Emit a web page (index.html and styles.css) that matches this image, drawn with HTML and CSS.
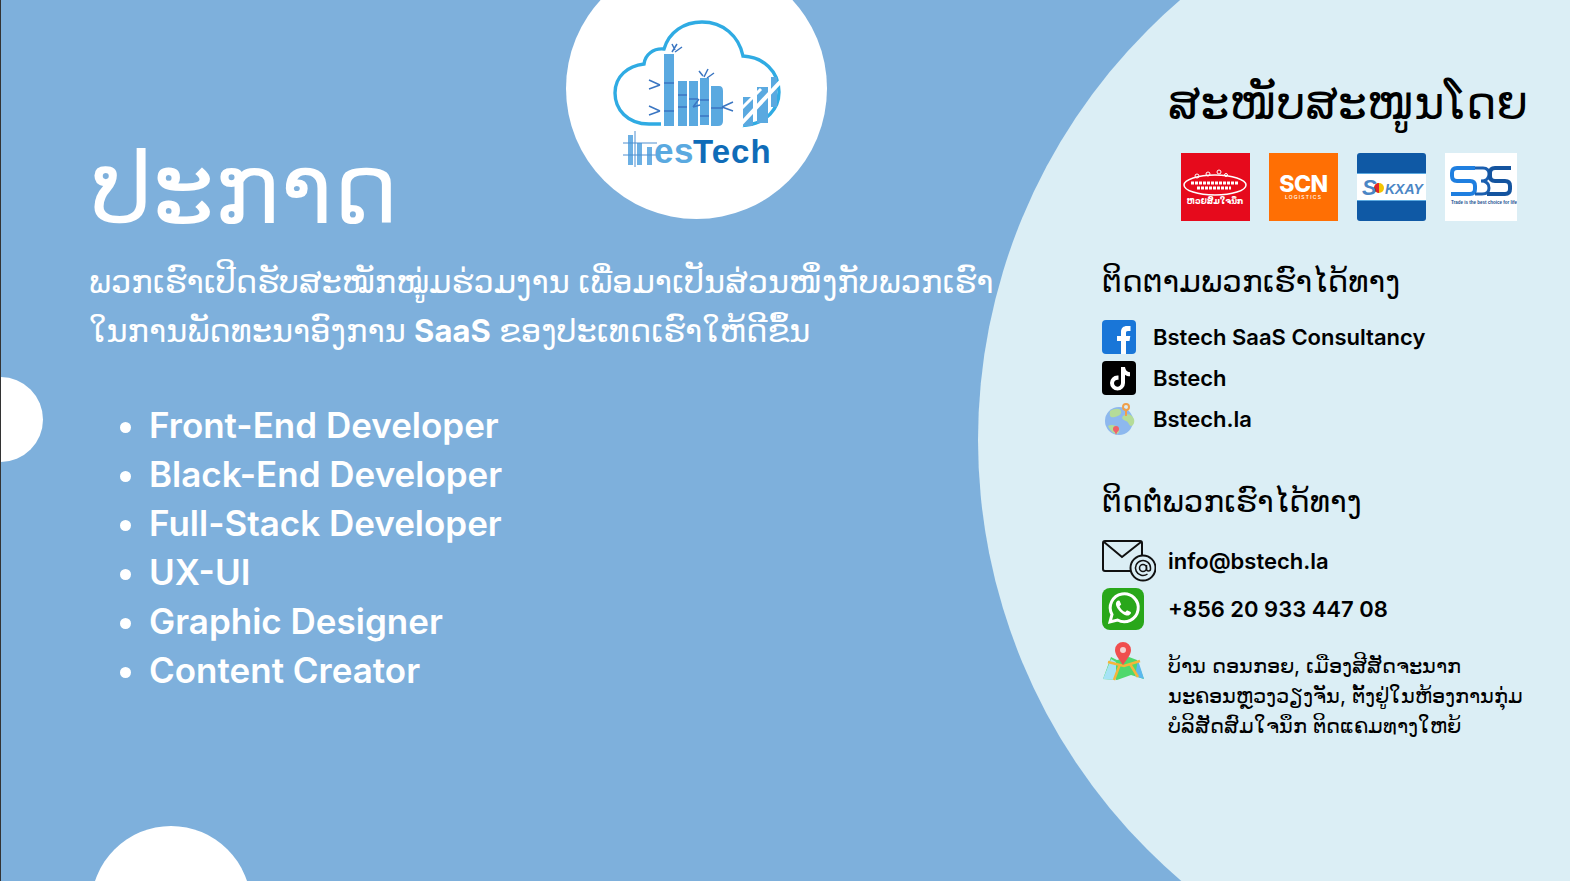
FILE: index.html
```html
<!DOCTYPE html>
<html lang="lo">
<head>
<meta charset="utf-8">
<title>ປະກາດ</title>
<link rel="stylesheet" href="styles.css">
</head>
<body>
<main class="slide">
  <div class="blob blob-right"></div>
  <div class="blob blob-logo"></div>
  <div class="blob blob-left"></div>
  <div class="blob blob-bottom"></div>

  <svg class="logo" viewBox="0 0 170 150" width="170" height="150" aria-label="BesTech">
    <path d="M50 105 H38 C16 105 4 90 4 74 C4 57 17 47 33 45 C34 36 42 29 53 30 C58 13 73 3 91 3 C112 3 128 17 132 37 C152 38 168 52 168 73 C168 90 155 104 136 106 L137 105" fill="none" stroke="#2fabe3" stroke-width="3.4"/>
    <g fill="#5aa9e0">
      <rect x="53" y="35" width="10" height="72"/><rect x="67" y="62" width="9" height="45"/><rect x="78" y="62" width="9" height="45"/><rect x="89" y="59" width="9" height="47"/><path d="M100 67 H108 Q112 67 112 72 V102 Q112 107 107 107 H100Z"/>
      <rect x="132" y="78" width="10" height="29"/><rect x="146" y="68" width="11" height="36"/><rect x="160" y="58" width="6" height="30"/>
    </g>
    <g stroke="#3b76c2" stroke-width="1.5" fill="none">
      <path d="M53 64H63M53 92H63M67 76H76M67 88H76M78 80H87M89 81H98M89 97H98M100 89H112"/>
      <path d="M61 33l5-8M64 33l7-5M64 31l-3-6M93 58l4-8M96 59l7-5M92 57l-4-5M49 66l-11-5M49 66l-11 4M49 92l-11-5M49 92l-11 4M111 88l11-5M111 88l11 4M82 88l6-8M82 88l7-2"/>
    </g>
    <path d="M128 107L170 62" stroke="#fff" stroke-width="4"/>
    <path d="M128 92L150 70" stroke="#fff" stroke-width="3"/>
    <g fill="#6cb0e4"><rect x="17" y="116" width="5" height="30"/><rect x="26" y="124" width="5" height="22"/><rect x="36" y="128" width="5" height="18"/></g>
    <path d="M12 124H46M12 136H46M24 112V148" stroke="#4f8fd0" stroke-width="1" fill="none"/>
    <text x="43" y="144" class="logo-es">es</text>
    <text x="82" y="144" class="logo-tech">Tech</text>
  </svg>

  <section class="left">
    <h1 class="title">ປະກາດ</h1>
    <p class="intro">ພວກເຮົາເປີດຮັບສະໝັກໝູ່ມຮ່ວມງານ ເພື່ອມາເປັນສ່ວນໜຶ່ງກັບພວກເຮົາ<br>ໃນການພັດທະນາອົງການ <b>SaaS</b> ຂອງປະເທດເຮົາໃຫ້ດີຂຶ້ນ</p>
    <ul class="jobs">
      <li>Front-End Developer</li>
      <li>Black-End Developer</li>
      <li>Full-Stack Developer</li>
      <li>UX-UI</li>
      <li>Graphic Designer</li>
      <li>Content Creator</li>
    </ul>
  </section>

  <aside class="right">
    <h2 class="sponsor-title">ສະໜັບສະໜູນໂດຍ</h2>
    <div class="sponsors">
      <div class="sp sp-red">
        <svg viewBox="0 0 69 68" width="69" height="68"><ellipse cx="34" cy="32" rx="31" ry="10" fill="none" stroke="#fff" stroke-width="1.5"/><path d="M10 30H58M16 35H50" stroke="#fff" stroke-width="3" stroke-dasharray="3 1"/><g fill="none" stroke="#fff"><circle cx="16" cy="23" r="2"/><circle cx="27" cy="21" r="2"/><circle cx="38" cy="19" r="2"/><circle cx="45" cy="22" r="1.5"/></g><text x="34" y="51" class="sp-red-text">ຫວຍສົມໃຈນຶກ</text></svg>
      </div>
      <div class="sp sp-orange"><span class="scn">SCN</span><span class="logi">LOGISTICS</span></div>
      <div class="sp sp-blue"><div class="sok"><svg viewBox="0 0 69 26" width="69" height="28"><circle cx="22" cy="13" r="5" fill="#f4c400"/><path d="M22 8a5 5 0 0 0 0 10z" fill="#e0242c"/><text x="5" y="20" class="sok-s">S</text><text x="28" y="19" class="sok-t">KXAY</text></svg></div></div>
      <div class="sp sp-white">
        <svg viewBox="0 0 72 68" width="72" height="68"><path d="M30 15H12Q7 15 7 20V23Q7 28 12 28H25Q30 28 30 33V36Q30 41 25 41H6" fill="none" stroke="#1f7fe0" stroke-width="4"/><path d="M30 15H38Q44 15 44 21Q44 28 36 28Q44 28 44 35Q44 41 37 41H30" fill="none" stroke="#1a5fb0" stroke-width="3"/><path d="M66 15H50Q45 15 45 20V23Q45 28 50 28H60Q65 28 65 33V36Q65 41 60 41H42" fill="none" stroke="#14549f" stroke-width="4"/><text x="6" y="51" class="sbs-text">Trade is the best choice for life...</text></svg>
      </div>
    </div>

    <h3 class="sub">ຕິດຕາມພວກເຮົາໄດ້ທາງ</h3>
    <ul class="social">
      <li>
        <svg class="ic" viewBox="0 0 34 34" width="34" height="34"><rect width="34" height="34" rx="4" fill="#1976d8"/><path d="M19 34V21h-4v-5h4v-4c0-4 2.400-6 6-6h3.500v5H26c-1.700 0-2 .8-2 2v3h4.300l-.8 5H24v13z" fill="#fff"/></svg>
        <span>Bstech SaaS Consultancy</span>
      </li>
      <li>
        <svg class="ic" viewBox="0 0 34 34" width="34" height="34"><rect width="34" height="34" rx="4" fill="#000"/><path d="M19 6h4c.3 3 2 5 5 5.300v4c-2 0-3.600-.6-5-1.600V22a7.500 7.500 0 1 1-7.500-7.500l1 .1v4.200a3.500 3.500 0 1 0 2.500 3.300z" fill="#fff"/></svg>
        <span>Bstech</span>
      </li>
      <li>
        <svg class="ic" viewBox="0 0 34 34" width="34" height="34"><circle cx="17" cy="19" r="14" fill="#8db8ee"/><path d="M8 9c5-3 10-3 11 0s-2 5-6 6-6 0-5-6zM21 14c4-3 9-2 11 3 1 4-1 7-3 7s-2-4-5-5-5-3-3-5zM6 24c3-2 8-1 11 2 1 3 0 5-2 6-4 0-7-4-9-8z" fill="#b5dc98"/><circle cx="14" cy="27" r="3" fill="#f0606a"/><path d="M12 28l2 5 2-5z" fill="#f0606a"/><circle cx="24" cy="5" r="3" fill="none" stroke="#f0a04a" stroke-width="2"/><path d="M24 8v6" stroke="#f0a04a" stroke-width="2"/></svg>
        <span>Bstech.la</span>
      </li>
    </ul>

    <h3 class="sub sub-contact">ຕິດຕໍ່ພວກເຮົາໄດ້ທາງ</h3>
    <ul class="contact">
      <li class="row-mail">
        <svg class="ic-big" viewBox="0 0 54 42" width="54" height="42"><path d="M28 31H3Q1 31 1 29V3Q1 1 3 1H38Q40 1 40 3V16" fill="none" stroke="#111" stroke-width="2"/><path d="M2 2L20 17L39 2" fill="none" stroke="#111" stroke-width="2"/><circle cx="41" cy="28" r="12.500" fill="#dbeef5" stroke="#111" stroke-width="2"/><circle cx="41" cy="28" r="3.500" fill="none" stroke="#111" stroke-width="1.500"/><path d="M44.500 25v4a2 2 0 0 0 4 0v-1a7.500 7.500 0 1 0-3 6" fill="none" stroke="#111" stroke-width="1.500"/></svg>
        <span>info@bstech.la</span>
      </li>
      <li class="row-wa">
        <svg class="ic-big" viewBox="0 0 42 42" width="42" height="42"><rect width="42" height="42" rx="8" fill="#29a71a"/><path d="M8 34l2-7.500A14 14 0 1 1 15.500 32z" fill="none" stroke="#fff" stroke-width="3"/><path d="M16 12.500c-1.500.8-2.500 2.500-2 4.500 1 4 6 9.500 10.500 10.500 2 .4 4-.7 4.500-2.500l-.3-1-3.700-1.800-1.700 1.800c-2.500-.8-5-3.300-5.800-5.800l1.700-1.700-1.600-3.800z" fill="#fff"/></svg>
        <span>+856 20 933 447 08</span>
      </li>
      <li class="row-map">
        <svg class="ic-big" viewBox="0 0 42 42" width="42" height="42"><path d="M1 37L9 15L15 18L27 15L35 18L42 37L29 33L15 38z" fill="#4fd86c"/><path d="M1 37L9 17L14 20L14 38z" fill="#a6e3f5"/><path d="M36 18L42 37L33 34z" fill="#5bb8ee"/><path d="M6 20L22 24L38 19M12 38L18 22M28 22L36 35" stroke="#f5b53a" stroke-width="2.500" fill="none"/><path d="M21 23C16 16 13 12 13 8a8 8 0 0 1 16 0c0 4-3 8-8 15z" fill="#f04e4e"/><circle cx="21" cy="8" r="3" fill="#f5d0d0"/></svg>
        <p class="addr">ບ້ານ ດອນກອຍ, ເມືອງສີສັດຈະນາກ<br>ນະຄອນຫຼວງວຽງຈັນ, ຕັ້ງຢູ່ໃນຫ້ອງການກຸ່ມ<br>ບໍລິສັດສົມໃຈນຶກ ຕິດແຄມທາງໃຫຍ້</p>
      </li>
    </ul>
  </aside>
</main>
</body>
</html>
```

FILE: styles.css
```css
* { box-sizing: border-box; margin: 0; padding: 0; }
html, body { width: 100%; height: 100%; overflow: hidden; background: #7eb0dc; }
body { font-family: "Noto Sans", "DejaVu Sans", sans-serif; }
.slide {
  position: relative;
  width: 1570px;
  height: 881px;
  overflow: hidden;
  background: #7eb0dc;
  border-left: 1px solid #333;
  display: flex;
  justify-content: space-between;
}
.blob { position: absolute; border-radius: 50%; }
.blob-right { left: 977px; top: -140px; width: 1160px; height: 1160px; background: #dbeef5; }
.blob-logo { left: 565px; top: -42px; width: 261px; height: 261px; background: #fff; }
.blob-left { left: -43px; top: 377px; width: 85px; height: 85px; background: #fff; }
.blob-bottom { left: 90px; top: 826px; width: 160px; height: 160px; background: #fff; }
.logo { position: absolute; left: 610px; top: 19px; }
.logo-es { font: 600 35px "Liberation Sans", sans-serif; fill: #5aa9e0; letter-spacing: .5px; }
.logo-tech { font: 700 33px "Liberation Sans", sans-serif; fill: #0f6cb8; letter-spacing: 1px; }

.left { position: relative; padding: 118px 0 0 88px; color: #fff; }
.title { font-size: 98px; font-weight: 400; line-height: 134px; padding-left: 2px; }
.intro { font-size: 32px; line-height: 49px; margin-top: 4px; white-space: nowrap; }
.intro b { font: 700 31px "Inter", "Open Sans", sans-serif; }
.jobs { margin: 47px 0 0 60px; font: 600 35px/49px "Inter", "Open Sans", sans-serif; }
.jobs li { padding-left: 0; }
.jobs li::marker { font-size: 35px; }

.right { position: relative; width: 468px; padding: 66px 0 0 0; color: #000; }
.sponsor-title { font-size: 46px; font-weight: 400; line-height: 70px; padding-left: 66px; white-space: nowrap; }
.sponsors { display: flex; gap: 19px; margin: 17px 0 0 79px; }
.sp { width: 69px; height: 68px; flex: none; position: relative; overflow: hidden; display: flex; flex-direction: column; align-items: center; justify-content: center; }
.sp-red { background: #e60a1c; }
.sp-orange { background: #ff6f04; color: #fff; }
.scn { font: 800 23px/20px "Inter", sans-serif; letter-spacing: -.5px; }
.logi { font: 500 5px/7px "Inter", sans-serif; letter-spacing: 1.200px; }
.sp-blue { background: #0f59a5; border-radius: 3px; }
.sok { width: 69px; height: 28px; background: #fff; border-top: 1px solid #5aa9e0; border-bottom: 1px solid #5aa9e0; display: flex; }
.sp-white { background: #fff; width: 72px; }
.sp-red-text { font-size: 8px; font-weight: 700; fill: #fff; text-anchor: middle; }
.sok-s { font: 700 italic 22px "Liberation Sans", sans-serif; fill: #4b86c5; }
.sok-t { font: 700 italic 14px "Liberation Sans", sans-serif; fill: #4b86c5; }
.sbs-text { font: 700 4.500px "Liberation Sans", sans-serif; fill: #1a4f8f; }

.sub { font-size: 31px; font-weight: 400; line-height: 46px; white-space: nowrap; }
.right .sub { margin-top: 36px; }
.right .sub-contact { margin-top: 41px; }
.social { list-style: none; margin-top: 17px; font: 600 22px/34px "Inter", sans-serif; }
.social li { display: flex; align-items: center; gap: 17px; height: 34px; margin-bottom: 7px; }
.contact { list-style: none; margin-top: 17px; font: 600 22px/30px "Inter", sans-serif; }
.contact li { display: flex; align-items: center; gap: 12px; }
.row-mail { height: 42px; margin-bottom: 6px; gap: 12px; }
.row-wa { height: 42px; margin-bottom: 12px; gap: 24px !important; }
.row-map { align-items: flex-start !important; gap: 24px !important; }
.addr { font-size: 21px; font-weight: 400; line-height: 30px; white-space: nowrap; margin-top: 9px; }
.ic, .ic-big { flex: none; }
```
